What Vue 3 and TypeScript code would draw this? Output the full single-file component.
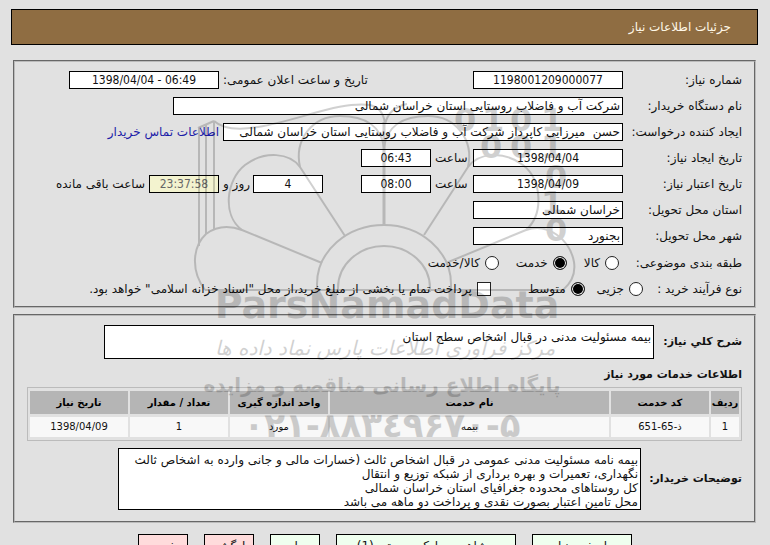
<script setup lang="ts">
import { ref } from 'vue'

interface ServiceRow {
  index: string
  code: string
  name: string
  unit: string
  amount: string
  date: string
}

const needNumber = ref('1198001209000077')
const announcedAt = ref('1398/04/04 - 06:49')
const buyer = ref('شرکت آب و فاضلاب روستایی استان خراسان شمالی')
const requester = ref('حسن  میرزایی کاپرداز شرکت آب و فاضلاب روستایی استان خراسان شمالی')
const createdDate = ref('1398/04/04')
const createdTime = ref('06:43')
const validDate = ref('1398/04/09')
const validTime = ref('08:00')
const daysLeft = ref('4')
const timeLeft = ref('23:37:58')
const province = ref('خراسان شمالی')
const city = ref('بجنورد')
const category = ref('service')
const process = ref('medium')
const treasury = ref(false)
const summary = ref('بیمه مسئولیت مدنی در قبال اشخاص سطح استان')
const notes = ref(
  'بیمه نامه مسئولیت مدنی عمومی در قبال اشخاص ثالث (خسارات مالی و جانی وارده به اشخاص ثالث\n' +
    'نگهداری، تعمیرات و بهره برداری از شبکه توزیع و انتقال\n' +
    'کل روستاهای محدوده جغرافیای استان خراسان شمالی\n' +
    'محل تامین اعتبار بصورت نقدی و پرداخت دو ماهه می باشد'
)

const services: ServiceRow[] = [
  { index: '1', code: 'ذ-65-651', name: 'بیمه', unit: 'مورد', amount: '1', date: '1398/04/09' }
]
</script>

<template>
  <div class="page" dir="rtl">
    <h1 class="banner">جزئیات اطلاعات نیاز</h1>

    <section class="panel general">
      <div class="row">
        <label class="name" for="number">شماره نیاز:</label>
        <input id="number" v-model="needNumber" class="box medium digits" readonly />
        <label class="between wide" for="announced">تاریخ و ساعت اعلان عمومی:</label>
        <input id="announced" v-model="announcedAt" class="box medium digits" readonly />
      </div>
      <div class="row">
        <label class="name" for="buyer">نام دستگاه خریدار:</label>
        <input id="buyer" v-model="buyer" class="box full" readonly />
      </div>
      <div class="row">
        <label class="name" for="requester">ایجاد کننده درخواست:</label>
        <input id="requester" v-model="requester" class="box long" readonly />
        <a class="contact" href="#contact">اطلاعات تماس خریدار</a>
      </div>
      <div class="row">
        <label class="name" for="created-date">تاریخ ایجاد نیاز:</label>
        <input id="created-date" v-model="createdDate" class="box medium digits" readonly />
        <label class="between hour" for="created-time">ساعت</label>
        <input id="created-time" v-model="createdTime" class="box short digits" readonly />
      </div>
      <div class="row">
        <label class="name" for="valid-date">تاریخ اعتبار نیاز:</label>
        <input id="valid-date" v-model="validDate" class="box medium digits" readonly />
        <label class="between hour" for="valid-time">ساعت</label>
        <input id="valid-time" v-model="validTime" class="box short digits" readonly />
        <input id="days" v-model="daysLeft" class="box short digits days" readonly />
        <label class="between day" for="days">روز و</label>
        <input id="time-left" v-model="timeLeft" class="box short digits countdown" readonly />
        <label class="after" for="time-left">ساعت باقی مانده</label>
      </div>
      <div class="row">
        <label class="name" for="province">استان محل تحویل:</label>
        <input id="province" v-model="province" class="box medium" readonly />
      </div>
      <div class="row">
        <label class="name" for="city">شهر محل تحویل:</label>
        <input id="city" v-model="city" class="box medium" readonly />
      </div>
      <div class="row choices" role="radiogroup" aria-labelledby="category-name">
        <span id="category-name" class="name">طبقه بندی موضوعی:</span>
        <label class="option first"><input v-model="category" type="radio" name="category" value="goods" />کالا</label>
        <label class="option"><input v-model="category" type="radio" name="category" value="service" />خدمت</label>
        <label class="option"><input v-model="category" type="radio" name="category" value="both" />کالا/خدمت</label>
      </div>
      <div class="row choices process" role="group" aria-labelledby="process-name">
        <span id="process-name" class="name narrow">نوع فرآیند خرید :</span>
        <label class="option"><input v-model="process" type="radio" name="process" value="small" />جزیی</label>
        <label class="option"><input v-model="process" type="radio" name="process" value="medium" />متوسط</label>
        <label class="option treasury"><input v-model="treasury" type="checkbox" />پرداخت تمام یا بخشی از مبلغ خرید،از محل "اسناد خزانه اسلامی" خواهد بود.</label>
      </div>
    </section>

    <section class="panel details">
      <div class="area-row">
        <label for="summary">شرح کلي نیاز:</label>
        <textarea id="summary" v-model="summary" class="area summary" readonly></textarea>
      </div>
      <h2 class="subtitle">اطلاعات خدمات مورد نیاز</h2>
      <table class="services">
        <colgroup>
          <col class="c-index" />
          <col class="c-mid" />
          <col />
          <col class="c-mid" />
          <col class="c-mid" />
          <col class="c-mid" />
        </colgroup>
        <thead>
          <tr>
            <th>ردیف</th>
            <th>کد خدمت</th>
            <th>نام خدمت</th>
            <th>واحد اندازه گیری</th>
            <th>تعداد / مقدار</th>
            <th>تاریخ نیاز</th>
          </tr>
        </thead>
        <tbody>
          <tr v-for="s in services" :key="s.index">
            <td>{{ s.index }}</td>
            <td>{{ s.code }}</td>
            <td>{{ s.name }}</td>
            <td>{{ s.unit }}</td>
            <td>{{ s.amount }}</td>
            <td>{{ s.date }}</td>
          </tr>
        </tbody>
      </table>
      <div class="area-row">
        <label class="notes-name" for="notes">توضیحات خریدار:</label>
        <textarea id="notes" v-model="notes" class="area notes" readonly></textarea>
      </div>
    </section>

    <div class="actions">
      <button type="button" class="action reply">پاسخ به نیاز</button>
      <button type="button" class="action files">مشاهده مدارک پیوستی (1)</button>
      <button type="button" class="action">چاپ</button>
      <button type="button" class="action leave">بازگشت</button>
      <button type="button" class="action leave">خروج</button>
    </div>

    <svg class="watermark" viewBox="185 95 400 350" width="400" height="350" aria-hidden="true">
      <g fill="none" stroke="#000" stroke-width="2">
        <path d="M199 246V128M206 234V125M214 230V121M198 128L214 121" />
        <path d="M214 121C224 130 240 130 258 127C300 120 340 101 370 105C379 107 384 114 385 124C388 112 396 106 407 104" />
        <path d="M384 122V225" stroke-width="3" />
        <path d="M317 292V284A67 59 0 0 1 451 284V292" />
        <path d="M338 292V288A46 42 0 0 1 430 288V292" />
        <path d="M205 290C190 270 193 246 206 234C218 225 231 226 242 230L322 263" />
        <path d="M242 230C222 215 226 180 245 165C265 150 290 153 300 167L345 236" />
        <path d="M300 167C294 140 312 116 340 116C366 116 381 127 384 147" />
        <path d="M384 147C387 127 402 116 428 116C456 116 474 140 468 167" />
        <path d="M424 235L468 167C478 153 503 150 523 165C542 180 544 214 526 230" />
        <path d="M446 263L526 230C548 222 570 240 574 262C576 275 570 284 563 290H205" />
      </g>
      <g class="binary">
        <text x="454" y="131">0</text>
        <text x="482" y="131">1</text>
        <text x="510" y="131">0</text>
        <text x="541" y="131">1</text>
        <text x="480" y="158">0</text>
        <text x="510" y="158">0</text>
        <text x="541" y="158">1</text>
        <text x="545" y="188">0</text>
        <text x="541" y="214">1</text>
        <text x="545" y="241">0</text>
      </g>
      <text class="brand" x="387" y="318">ParsNamadData</text>
      <text class="script" x="385" y="355">مرکز فرآوری اطلاعات پارس نماد داده ها</text>
      <text class="tagline" x="382" y="392">پایگاه اطلاع رسانی مناقصه و مزایده</text>
      <text class="phone" x="382" y="437">۰۲۱-۸۸۳٤۹۶۷۰-۵</text>
    </svg>
  </div>
</template>

<style>
html {
  scrollbar-width: none;
}
body {
  background: #e1e1e1;
}
</style>

<style scoped>
.page {
  position: relative;
  box-sizing: border-box;
  padding: 9px 14px 12px 13px;
  background: #e1e1e1;
  color: #111;
  font-family: 'DejaVu Sans', sans-serif;
  font-size: 12px;
  line-height: 18px;
}
.banner {
  margin: 0 -2px;
  padding: 9px 26px 8px;
  border: 1px solid #000;
  background: #8f6d42;
  color: #fff8e8;
  font-size: 12px;
  font-weight: 400;
  line-height: 17px;
}
.panel {
  border: 2px groove #bbb;
  padding: 9px 12px 0;
}
.general {
  margin-top: 15px;
  padding-bottom: 8px;
}
.row {
  display: flex;
  align-items: center;
  height: 18px;
  margin-bottom: 8px;
  white-space: nowrap;
}
.row.choices {
  height: 19px;
  margin-bottom: 7px;
}
.row.choices:last-child {
  margin-bottom: 0;
}
.name {
  flex: none;
  width: 119px;
}
.name.narrow {
  width: 99px;
}
.box {
  box-sizing: border-box;
  flex: none;
  height: 18px;
  margin: 0;
  padding: 0 2px;
  border: 1px solid #000;
  border-radius: 0;
  background: #fff;
  color: #111;
  font: inherit;
  outline: 0;
}
.medium {
  width: 150px;
}
.short {
  width: 70px;
}
.long {
  width: 400px;
}
.full {
  width: 450px;
}
.digits {
  direction: ltr;
  font-family: 'DejaVu Sans Condensed', 'DejaVu Sans', sans-serif;
  text-align: center;
}
.between {
  box-sizing: border-box;
  flex: none;
  padding-left: 4px;
  text-align: left;
}
.wide {
  width: 254px;
}
.hour {
  width: 42px;
}
.day {
  width: 34px;
}
.days {
  margin-right: 38px;
}
.countdown {
  background: #f3f3cf;
  color: #666;
}
.after,
.contact {
  margin-right: 4px;
}
.contact {
  color: #1c1ca8;
  text-decoration: none;
}
.option {
  display: flex;
  align-items: center;
  gap: 5px;
  margin-left: 17px;
}
.process .option {
  margin-left: 12px;
}
.option.first {
  margin-right: 4px;
}
.process .treasury {
  margin-right: 25px;
  margin-left: 0;
}
.option input {
  appearance: none;
  box-sizing: border-box;
  flex: none;
  width: 14px;
  height: 14px;
  margin: 0;
  border: 1px solid #222;
  background: #fff;
}
.option input[type='radio'] {
  border-radius: 50%;
}
.option input[type='radio']:checked {
  background: #000;
  box-shadow: inset 0 0 0 1px #fff;
}
.option input[type='checkbox']:checked {
  background: #000;
  box-shadow: inset 0 0 0 2px #fff;
}
.details {
  margin-top: 6px;
  padding-bottom: 11px;
}
.area-row {
  display: flex;
  align-items: center;
  gap: 6px;
}
.area-row label {
  flex: none;
  box-sizing: border-box;
  width: 82px;
  font-size: 11px;
  font-weight: 700;
  white-space: nowrap;
}
.area-row .notes-name {
  width: 95px;
}
.area {
  box-sizing: border-box;
  display: block;
  margin: 0;
  padding: 4px 2px 0;
  border: 1px solid #000;
  border-radius: 0;
  background: #fff;
  color: #111;
  font: inherit;
  line-height: 14px;
  white-space: pre;
  resize: none;
  outline: 0;
  overflow: hidden;
}
.summary {
  width: 550px;
  height: 34px;
}
.notes {
  width: 523px;
  height: 62px;
}
.subtitle {
  margin: 7px 0 3px;
  font-size: 11px;
  font-weight: 700;
  line-height: 18px;
}
.services {
  width: 100%;
  margin-bottom: 7px;
  border: 1px solid #bbb;
  border-collapse: separate;
  border-spacing: 2px 3px;
  table-layout: fixed;
  font-size: 10px;
  line-height: 16px;
  text-align: center;
}
.services th {
  height: 23px;
  padding: 0;
  background: #b5b5b5;
  color: #000;
  white-space: nowrap;
}
.services td {
  height: 20px;
  padding: 0;
  background: #f8f8f8;
}
.c-index {
  width: 28px;
}
.c-mid {
  width: 98px;
}
.actions {
  display: flex;
  justify-content: center;
  gap: 16px;
  margin-top: 11px;
}
.action {
  box-sizing: border-box;
  width: 50px;
  height: 24px;
  padding: 0;
  border: 1px solid #000;
  border-radius: 0;
  background: #efffef;
  color: #111;
  font: inherit;
  white-space: nowrap;
}
.reply {
  width: 100px;
}
.files {
  width: 180px;
}
.leave {
  background: #ffdcdc;
}
.watermark {
  position: absolute;
  top: 95px;
  left: 50%;
  margin-left: -200px;
  direction: ltr;
  opacity: 0.18;
  pointer-events: none;
}
.watermark text {
  text-anchor: middle;
}
.watermark .binary text {
  font: 700 32px 'DejaVu Sans', sans-serif;
  text-anchor: start;
}
.watermark .brand {
  font: 700 38px 'DejaVu Sans', sans-serif;
}
.watermark .script {
  font: italic 20px 'DejaVu Sans', sans-serif;
}
.watermark .tagline {
  font: 700 20px 'DejaVu Sans', sans-serif;
}
.watermark .phone {
  direction: ltr;
  unicode-bidi: bidi-override;
  font: 700 34px 'DejaVu Sans', sans-serif;
}
</style>
